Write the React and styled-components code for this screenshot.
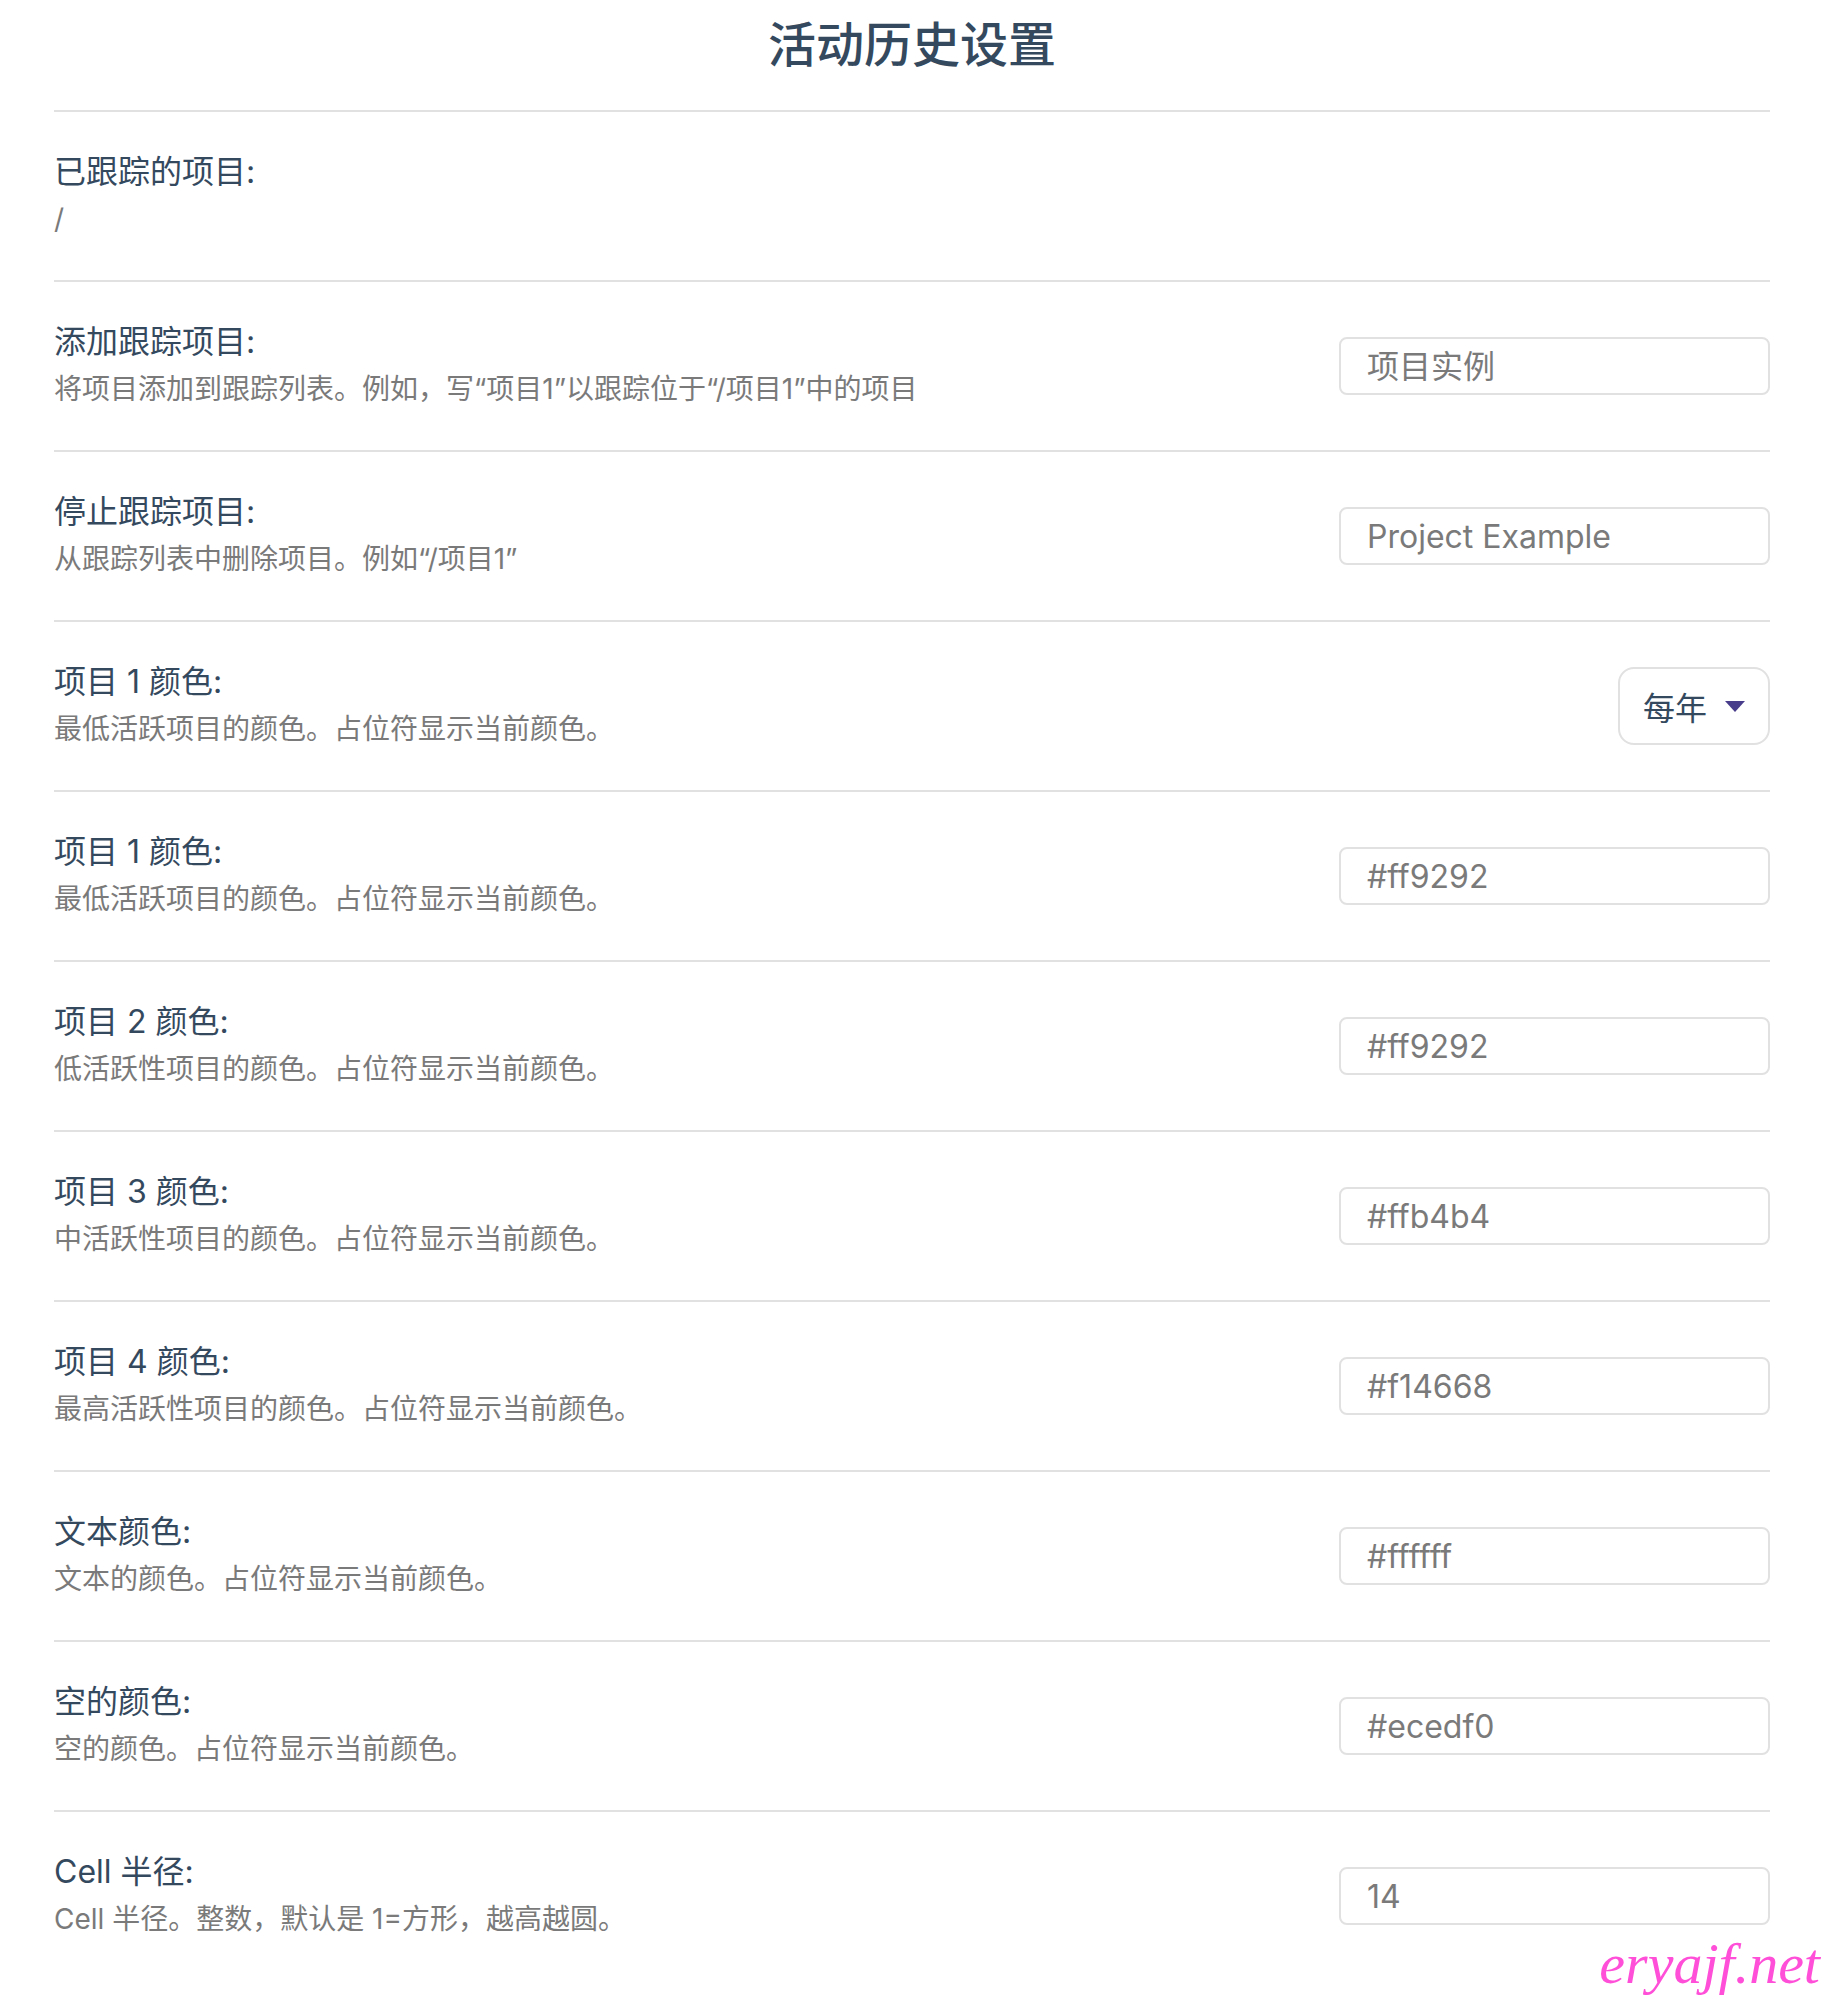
import React from "react";
import styled, { createGlobalStyle } from "styled-components";

const GlobalStyle = createGlobalStyle`
  html, body {
    margin: 0;
    padding: 0;
    background: #ffffff;
  }
  body {
    font-family: Inter, "Noto Sans CJK SC", "Noto Sans", sans-serif;
    -webkit-font-smoothing: antialiased;
  }
  * { box-sizing: border-box; }
`;

const Page = styled.div`
  position: relative;
  min-height: 100vh;
  padding: 0 54px;
`;

const Title = styled.h1`
  margin: 0;
  padding: 9px 0 29px;
  font-size: 48px;
  line-height: 72px;
  font-weight: 500;
  color: #34495e;
  text-align: center;
`;

const Row = styled.section`
  display: flex;
  align-items: center;
  justify-content: space-between;
  gap: 40px;
  padding: 36px 0;
  border-top: 2px solid #e1e1e1;
`;

const TextBlock = styled.div`
  display: flex;
  flex-direction: column;
  padding-bottom: 4px;
  min-height: 96px;
`;

const Label = styled.div`
  font-size: 32px;
  line-height: 48px;
  color: #34495e;
  font-weight: 400;
`;

const Desc = styled.div`
  margin-top: 2px;
  font-size: 28px;
  line-height: 42px;
  color: #7a7a7a;
`;

const TextInput = styled.input`
  flex: none;
  width: 431px;
  height: 58px;
  padding: 0 26px;
  border: 2px solid #e1e1e1;
  border-radius: 8px;
  background: #ffffff;
  font-family: Inter, "Noto Sans CJK SC", sans-serif;
  font-size: 32px;
  color: #34495e;
  outline: none;
  &::placeholder {
    color: #7a7a7a;
  }
`;

const Dropdown = styled.button`
  flex: none;
  display: flex;
  align-items: center;
  justify-content: space-between;
  width: 152px;
  height: 78px;
  padding: 0 23px;
  border: 2px solid #e1e1e1;
  border-radius: 16px;
  background: #ffffff;
  font-family: Inter, "Noto Sans CJK SC", sans-serif;
  font-size: 32px;
  color: #34495e;
  white-space: nowrap;
  cursor: pointer;
`;

const Caret = styled.svg`
  flex: none;
  width: 20px;
  height: 11px;
`;

const Watermark = styled.div`
  position: absolute;
  right: 4px;
  bottom: 21px;
  font-family: "Liberation Serif", "DejaVu Serif", serif;
  font-style: italic;
  font-size: 58px;
  line-height: 1;
  color: #ff4fd8;
  pointer-events: none;
`;

const rows = [
  { label: "添加跟踪项目:", desc: "将项目添加到跟踪列表。例如，写“项目1”以跟踪位于“/项目1”中的项目", placeholder: "项目实例" },
  { label: "停止跟踪项目:", desc: "从跟踪列表中删除项目。例如“/项目1”", placeholder: "Project Example" },
  { label: "项目 1 颜色:", desc: "最低活跃项目的颜色。占位符显示当前颜色。", dropdown: "每年" },
  { label: "项目 1 颜色:", desc: "最低活跃项目的颜色。占位符显示当前颜色。", placeholder: "#ff9292" },
  { label: "项目 2 颜色:", desc: "低活跃性项目的颜色。占位符显示当前颜色。", placeholder: "#ff9292" },
  { label: "项目 3 颜色:", desc: "中活跃性项目的颜色。占位符显示当前颜色。", placeholder: "#ffb4b4" },
  { label: "项目 4 颜色:", desc: "最高活跃性项目的颜色。占位符显示当前颜色。", placeholder: "#f14668" },
  { label: "文本颜色:", desc: "文本的颜色。占位符显示当前颜色。", placeholder: "#ffffff" },
  { label: "空的颜色:", desc: "空的颜色。占位符显示当前颜色。", placeholder: "#ecedf0" },
  { label: "Cell 半径:", desc: "Cell 半径。整数，默认是 1=方形，越高越圆。", placeholder: "14" },
];

export default function App() {
  return (
    <>
      <GlobalStyle />
      <Page>
        <Title>活动历史设置</Title>
        <Row>
          <TextBlock>
            <Label>已跟踪的项目:</Label>
            <Desc>/</Desc>
          </TextBlock>
        </Row>
        {rows.map((r, i) => (
          <Row key={i}>
            <TextBlock>
              <Label>{r.label}</Label>
              <Desc>{r.desc}</Desc>
            </TextBlock>
            {r.dropdown ? (
              <Dropdown type="button">
                <span>{r.dropdown}</span>
                <Caret viewBox="0 0 20 11" aria-hidden="true">
                  <path d="M0 0 H20 L10 11 Z" fill="#483d8b" />
                </Caret>
              </Dropdown>
            ) : (
              <TextInput type="text" placeholder={r.placeholder} />
            )}
          </Row>
        ))}
        <Watermark>eryajf.net</Watermark>
      </Page>
    </>
  );
}
